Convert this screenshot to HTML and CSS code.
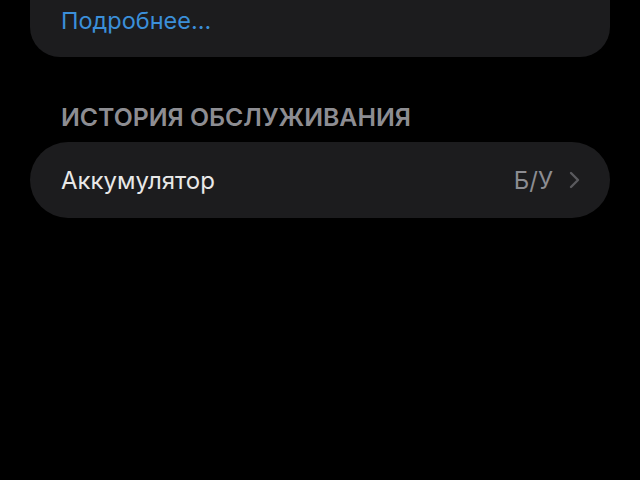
FILE: index.html
```html
<!DOCTYPE html>
<html lang="ru">
<head>
<meta charset="utf-8">
<link rel="stylesheet" href="styles.css">
</head>
<body>
<div class="page">
  <section class="card info">
    <p class="info-text">установлен оригинальный дисплей Apple.</p>
    <a class="more" href="#">Подробнее...</a>
  </section>
  <h2 class="section-title">ИСТОРИЯ ОБСЛУЖИВАНИЯ</h2>
  <section class="card row">
    <span class="row-label">Аккумулятор</span>
    <span class="row-value">Б/У</span>
    <svg class="chevron" width="11" height="18" viewBox="0 0 11 18"><path d="M2 2 L9 9 L2 16" fill="none" stroke="#5a5a5e" stroke-width="2.4" stroke-linecap="round" stroke-linejoin="round"/></svg>
  </section>
</div>
</body>
</html>
```
FILE: styles.css
```css
html, body {
  margin: 0;
  padding: 0;
  background: #000;
  height: 100%;
  overflow: hidden;
}
.page {
  padding: 0 30px;
  font-family: Inter, Roboto, "Noto Sans", sans-serif;
}
.card {
  background: #1c1c1e;
  border-radius: 30px;
}
.info {
  margin-top: -28px;
  padding: 0 31px 21px;
  border-top-left-radius: 0;
  border-top-right-radius: 0;
}
.info-text {
  margin: 0;
  color: #d0d0d2;
  font-size: 22px;
  line-height: 30px;
  white-space: nowrap;
  overflow: hidden;
}
.more {
  display: block;
  margin-top: 4px;
  color: #3b8fd9;
  font-size: 23.5px;
  line-height: 30px;
  text-decoration: none;
}
.section-title {
  margin: 0;
  padding: 46px 31px 11px;
  color: #8d8d92;
  font-size: 24.8px;
  font-weight: 600;
  line-height: 28px;
  letter-spacing: 0;
  white-space: nowrap;
}
.row {
  display: flex;
  align-items: center;
  height: 76px;
  padding: 0 30px 0 31px;
  border-radius: 38px;
}
.row-label {
  flex: 1;
  color: #e8e8e8;
  font-size: 24px;
}
.row-value {
  color: #8d8d92;
  font-size: 24px;
  margin-right: 16px;
}
.chevron {
  display: block;
}
```
